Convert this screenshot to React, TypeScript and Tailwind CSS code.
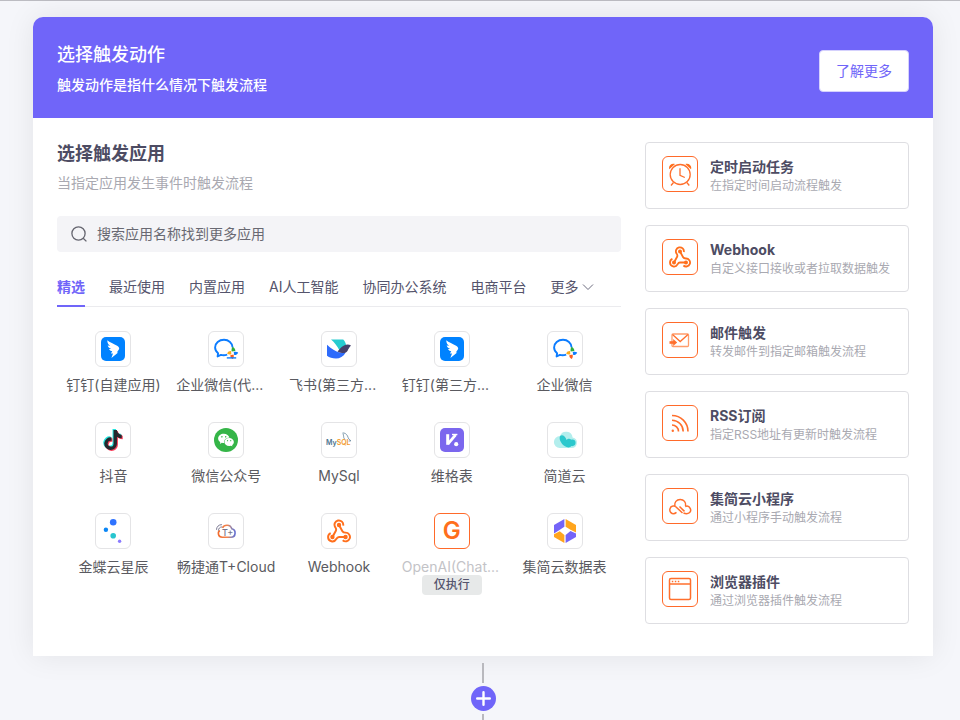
import type { ReactNode } from "react"
import clsx from "clsx"
import { FaTiktok } from "react-icons/fa"
import { AiFillWechat } from "react-icons/ai"

const svgProps = { viewBox: "0 0 24 24", fill: "none", className: "size-6 overflow-visible" }

function WebhookIcon({ className }: { className: string }) {
  return (
    <svg viewBox="1 1 22 21" fill="none" stroke="#ff6f1c" strokeWidth="1.8" className={className}>
      <path d="M18 17h-6c-1.1 0-1.95.94-2.48 1.9A4 4 0 0 1 2 17c0-1.7 1-3 2.4-3.6" />
      <path d="m6 17 3.13-5.78c.53-.97.1-2.18-.5-3.1a4 4 0 1 1 7.2-1.6" />
      <path d="m12 6 3.13 5.73C15.66 12.7 16.9 13 18 13a4 4 0 1 1-2.6 7" />
      <g fill="#ff6f1c" stroke="none">
        <circle cx="12" cy="6" r="2" />
        <circle cx="6" cy="17" r="2" />
        <circle cx="18" cy="17" r="2" />
      </g>
    </svg>
  )
}

function DingTalkIcon() {
  return (
    <svg {...svgProps}>
      <rect width="24" height="24" rx="5" fill="#0082ff" />
      <path
        fill="#fff"
        d="M6.3 3.2c2 2 7 3.6 9.8 5.6 1.6 1.2 2.6 2.2 1.9 3.4-.6 1-1.3 1.9-2.2 3.2h1.4L10.4 21l1.6-4.600h-2l1.200-2.400c-1.600-.1-2.600-.8-3.200-2.100.9.2 1.500.2 2.200 0C8.200 11.200 7 10 6.700 8.300c.8.4 1.500.6 2.300.6C7.300 7.600 6.200 5.600 6.300 3.200z"
      />
    </svg>
  )
}

function WeComIcon({ underline = false }: { underline?: boolean }) {
  return (
    <svg {...svgProps}>
      <path
        d="M18.600 10.500C18.400 6 14.600 2.800 10 2.800c-5 0-8.900 3.300-8.900 7.700 0 2.400 1.200 4.300 3 5.700l-.5 3.300 3.300-1.600c1.900.5 4.200.4 6.300-.3"
        stroke="#0b7cff"
        strokeWidth="1.900"
        strokeLinejoin="round"
      />
      <path d="M18.700 9.800c2 1.100 2.700 2.500 2.600 4.300l-3.600.4c-.5-1.700-.1-3.300 1-4.700z" fill="#2fae3c" />
      <path d="M24.200 15.500c-.8 1.900-2.200 2.700-4 2.600l-.5-3c1.700-.6 3.200-.4 4.500.4z" fill="#0b7cff" />
      <path d="M18.700 22c-1.700-.8-2.400-2.100-2.400-3.800l3.200-.6c.6 1.700.3 3.100-.8 4.400z" fill="#fb5d1e" />
      <path d="M13.100 16.500c.8-1.800 2.100-2.600 3.900-2.500l.4 3.200c-1.500.5-3 .3-4.300-.7z" fill="#fbab1b" />
      {underline && <path d="M12.800 20.900h9.400" stroke="#0b7cff" strokeWidth="1.400" />}
    </svg>
  )
}

function FeishuIcon() {
  return (
    <svg {...svgProps}>
      <path d="M4 2.500h12.200c1.700 1.600 2.600 3.700 2.900 6l-6.700 4.700C10.300 9 7.500 5.500 4 2.500z" fill="#26cbd0" />
      <path d="M0 7.700c4 4 8.600 6.900 14 8.100 1.700.3 3.300.2 4.700-.4C16.300 19.400 13 21.500 9 21.500c-3.600 0-6.700-1-9-2.800z" fill="#2e6bfb" />
      <path d="M24 8.500c-1.600 1.600-2.400 3.300-3.400 5.200-1.600 2.700-5 3.100-10.100.7 3.200-3 5.500-6.700 10-6.800 1.300 0 2.500.3 3.500.9z" fill="#45406b" />
    </svg>
  )
}

function DouyinIcon() {
  return (
    <div className="relative size-5">
      <FaTiktok className="absolute -left-px -top-px size-5 text-[#25e5df]" />
      <FaTiktok className="absolute left-px top-px size-5 text-[#f8425e]" />
      <FaTiktok className="absolute size-5 text-[#24292e]" />
    </div>
  )
}

function WechatIcon() {
  return (
    <div className="flex size-6 items-center justify-center rounded-full bg-[#35b548]">
      <AiFillWechat className="size-[18px] text-white" />
    </div>
  )
}

function MySqlIcon() {
  return (
    <svg {...svgProps}>
      <text x="-1" y="17" fontSize="7" fontWeight="600" fontFamily="Inter, sans-serif" fill="#4b7390">
        My<tspan fill="#f29a2e">SQL</tspan>
      </text>
      <path d="M15.500 5c2-.4 3.800.8 5 2.900.5 1.200.9 2.700 1.500 3.400l2 1.500-2.300.3M16 5.600c.3 1.200.6 1.900.7 3.200-.1 1.400.8 2.100 1.500 2.500" stroke="#66869c" strokeWidth=".8" />
    </svg>
  )
}

function VikaIcon() {
  return (
    <svg {...svgProps}>
      <rect width="24" height="24" rx="5" fill="#7b67ee" />
      <path d="M7.700 6.200v10.600" stroke="#fff" strokeWidth="3" />
      <path d="M8 15.800l7.600-9" stroke="#fff" strokeWidth="2.800" />
      <path d="M12 6.500h5.400" stroke="#fff" strokeWidth="1.400" />
      <circle cx="16.200" cy="16.200" r="2.100" fill="#fff" />
    </svg>
  )
}

function JiandaoIcon() {
  return (
    <svg {...svgProps}>
      <path d="M7 8a6.500 6.500 0 0 1 12.600 1.500A5.300 5.300 0 0 1 18.500 20H6.800A6 6 0 1 1 7 8z" fill="#b3eeed" />
      <path d="M7 8.200c1.800-2.200 5.200-.6 6.600 3.800 1-1.500 3.300-2 4.600-.2 2.200-.7 4.400.6 4.400 3 0 2.300-1.900 3.600-4 3.300-1.200 1.200-3.200 1.700-5 .9C9.200 17.600 5.400 11.500 7 8.200z" fill="#2bc8cd" />
    </svg>
  )
}

function KingdeeIcon() {
  return (
    <svg {...svgProps}>
      <circle cx="12.200" cy="3.300" r="3.300" fill="#2f73ff" />
      <circle cx="4.900" cy="10.700" r="2.200" fill="#0b86f5" />
      <circle cx="12.200" cy="16.700" r="2.800" fill="#28c5cf" />
      <circle cx="18.600" cy="22.200" r="1.700" fill="#8b7bff" />
    </svg>
  )
}

function ChanjetIcon() {
  return (
    <svg {...svgProps}>
      <defs>
        <linearGradient id="chanjet" x1="4" y1="0" x2="22" y2="0" gradientUnits="userSpaceOnUse">
          <stop offset="0" stopColor="#f26b2c" />
          <stop offset=".5" stopColor="#f4834a" />
          <stop offset=".75" stopColor="#8f83ad" />
          <stop offset="1" stopColor="#5868d8" />
        </linearGradient>
      </defs>
      <path d="M8.500 8.800C10 5.500 16.400 4.900 17.800 9.800c4.600.9 4.300 8.400-.8 8.400H8.200c-4.200 0-4.800-5-2.400-6.700" stroke="url(#chanjet)" strokeWidth="1.600" />
      <path d="M2.500 10.800c0-3 2.200-5.200 5.400-5.200M4.400 11.700c0-2.200 1.500-3.800 3.700-3.800" stroke="#7d7b94" strokeWidth="1" />
      <text x="8" y="17" fontSize="9" fontWeight="500" fontFamily="Inter, sans-serif" fill="#77758c">
        T+
      </text>
    </svg>
  )
}

function DataTableIcon() {
  return (
    <svg {...svgProps}>
      <path d="M11.400 0v7.800L6.500 11 1 14.400V6z" fill="#7464f8" />
      <path d="M12.600 0v7.800l4.900 3L23 13.500V6z" fill="#ffa51d" />
      <path d="M1 15.300v2.800L11.400 24v-8l-4.600-3.700z" fill="#ffa51d" />
      <path d="M23 14.500v3.600L12.600 24v-8l4.900-4z" fill="#7464f8" />
    </svg>
  )
}

const orange = { viewBox: "0 0 24 24", fill: "none", stroke: "#ff6f2c", strokeWidth: 1.3, className: "size-6" }

function AlarmIcon() {
  return (
    <svg {...orange}>
      <circle cx="12.200" cy="12.500" r="10" />
      <path d="M12 6.300v7l4.800 2.200M5.500 20.500l-2.500 3M18.800 20.500l2.500 3" />
      <path d="M1.300 7.300C.1 4 3.200.7 7 1.900zM23 7.300c1.200-3.300-1.900-6.600-5.700-5.400z" fill="#ff6f1c" stroke="none" />
    </svg>
  )
}

function MailIcon() {
  return (
    <svg {...orange}>
      <rect x="4" y="6" width="16.500" height="12.500" rx="1" stroke="#ff9d6c" />
      <path d="m4.500 6.500 7.700 7 7.800-7" />
      <path d="M1.500 14.500h5" strokeWidth="2.600" />
      <path d="m5.200 11 4 3.500-4 3.500z" fill="#ff6f2c" stroke="none" />
    </svg>
  )
}

function RssIcon() {
  return (
    <svg {...orange}>
      <path d="M4 4.500c8.800 0 16 7.100 16 16M4 9.200c6.200 0 11.200 5 11.200 11.300M4 14c3.600 0 6.500 2.900 6.500 6.500" strokeWidth="1.600" />
      <circle cx="4.800" cy="19.700" r="1.200" fill="#ff6f2c" stroke="none" />
    </svg>
  )
}

function CloudIcon() {
  return (
    <svg {...orange} strokeWidth={1.5}>
      <path d="M8.500 18.400c-2 1.600-4.200 1.600-5.600.2-1.900-1.900-1.300-5.900 1.900-6.500.8-.2 1.700-.1 2.400.1" />
      <path d="M6.800 12C6.200 8.300 8.500 5.500 12.200 5.500s6 2.800 5.400 6.500" />
      <path d="m7.200 12.200 7.300 6.800M11.500 12.500l5 4.900M15.500 19c5 2.200 8.400-1.300 6.700-4.700-1-2-3.300-2.500-5-1.800" />
    </svg>
  )
}

function BrowserIcon() {
  return (
    <svg {...orange} strokeWidth={1.5}>
      <rect x="1.500" y="1.500" width="21" height="21" rx="1.500" />
      <path d="M1.500 7h21" />
      <path d="M3.800 4.400h7.500" strokeDasharray="1.500 1.500" />
    </svg>
  )
}

interface AppItem {
  name: string
  icon: ReactNode
  disabled?: boolean
}

const apps: AppItem[] = [
  { name: "钉钉(自建应用)", icon: <DingTalkIcon /> },
  { name: "企业微信(代...", icon: <WeComIcon underline /> },
  { name: "飞书(第三方...", icon: <FeishuIcon /> },
  { name: "钉钉(第三方...", icon: <DingTalkIcon /> },
  { name: "企业微信", icon: <WeComIcon /> },
  { name: "抖音", icon: <DouyinIcon /> },
  { name: "微信公众号", icon: <WechatIcon /> },
  { name: "MySql", icon: <MySqlIcon /> },
  { name: "维格表", icon: <VikaIcon /> },
  { name: "简道云", icon: <JiandaoIcon /> },
  { name: "金蝶云星辰", icon: <KingdeeIcon /> },
  { name: "畅捷通T+Cloud", icon: <ChanjetIcon /> },
  { name: "Webhook", icon: <WebhookIcon className="size-6" /> },
  { name: "OpenAI(Chat...", icon: <span className="text-2xl font-semibold text-[#ff6f1c]">G</span>, disabled: true },
  { name: "集简云数据表", icon: <DataTableIcon /> },
]

const triggers = [
  { title: "定时启动任务", desc: "在指定时间启动流程触发", icon: <AlarmIcon /> },
  { title: "Webhook", desc: "自定义接口接收或者拉取数据触发", icon: <WebhookIcon className="size-[22px]" /> },
  { title: "邮件触发", desc: "转发邮件到指定邮箱触发流程", icon: <MailIcon /> },
  { title: "RSS订阅", desc: "指定RSS地址有更新时触发流程", icon: <RssIcon /> },
  { title: "集简云小程序", desc: "通过小程序手动触发流程", icon: <CloudIcon /> },
  { title: "浏览器插件", desc: "通过浏览器插件触发流程", icon: <BrowserIcon /> },
]

const tabs = ["精选", "最近使用", "内置应用", "AI人工智能", "协同办公系统", "电商平台"]

function AppButton({ app }: { app: AppItem }) {
  // shortened names start at the left edge of the label box
  const shortened = app.name.endsWith("...")

  return (
    <button type="button" className="relative flex flex-col items-center gap-2">
      <span
        className={clsx(
          "flex size-9 items-center justify-center rounded-md border bg-white",
          app.disabled ? "border-[#ff6a2a]" : "border-[#e4e4e6]"
        )}
      >
        {app.icon}
      </span>
      <span
        className={clsx(
          "w-[100px] text-sm leading-5 whitespace-nowrap",
          shortened ? "text-left" : "text-center",
          app.disabled ? "text-[#c3c3c7]" : "text-[#5a5a60]"
        )}
      >
        {app.name}
      </span>
      {app.disabled && (
        <span className="absolute top-[62px] rounded-sm bg-[#e7e9e9] px-3 text-xs leading-5 font-medium text-[#55556e]">
          仅执行
        </span>
      )}
    </button>
  )
}

export default function App() {
  return (
    <div className="flex min-h-screen flex-col border-t border-[#bcbcc2] bg-[#f5f6fa] pt-4 pr-[27px] pl-[33px] font-[Inter,'Noto_Sans_CJK_SC',sans-serif]">
      <main className="rounded-t-[10px] bg-white shadow-[0_0_30px_rgba(0,0,0,0.08)]">
        {/* Header */}
        <header className="flex items-center justify-between rounded-t-[10px] bg-[#7065f9] px-6 pt-6 pb-[18px] text-white">
          <div>
            <h1 className="text-lg leading-7 font-medium">选择触发动作</h1>
            <p className="text-sm leading-[31px] font-medium">触发动作是指什么情况下触发流程</p>
          </div>
          <button type="button" className="rounded-sm border border-[#d5d1fd] bg-white px-4 py-2.5 text-sm leading-5 text-[#7065f9]">
            了解更多
          </button>
        </header>

        <div className="flex gap-6 px-6 pt-6 pb-8">
          {/* App picker */}
          <section className="min-w-0 flex-1">
            <h2 className="text-lg leading-6 font-bold text-[#4d4c63]">选择触发应用</h2>
            <p className="mt-[7px] text-sm leading-5 text-[#a9a9b1]">当指定应用发生事件时触发流程</p>

            <label className="mt-[23px] flex h-9 items-center gap-2.5 rounded bg-[#f4f4f7] px-3.5">
              <svg viewBox="0 0 16 16" fill="none" stroke="#65656f" strokeWidth="1.3" className="size-4">
                <circle cx="7.500" cy="7.500" r="6.600" />
                <path d="m12.200 12.200 3.200 3.200" />
              </svg>
              <input
                type="text"
                aria-label="搜索应用名称找到更多应用"
                placeholder="搜索应用名称找到更多应用"
                className="min-w-0 flex-1 bg-transparent text-sm outline-none placeholder:text-[#696972]"
              />
            </label>

            <nav className="mt-[22px] flex gap-6 border-b border-[#ebebee] text-sm text-[#55546c]">
              {tabs.map((tab, i) => (
                <button
                  key={tab}
                  type="button"
                  className={clsx(
                    "-mb-px border-b-2 pt-[3px] pb-2 leading-5",
                    i === 0 ? "border-[#7065f9] font-bold text-[#7065f9]" : "border-transparent"
                  )}
                >
                  {tab}
                </button>
              ))}
              <button type="button" className="-mb-px flex items-center gap-1 border-b-2 border-transparent pt-[3px] pb-2 leading-5">
                更多
                <svg viewBox="0 0 12 12" fill="none" stroke="#6c6b7e" strokeWidth="1" className="size-3">
                  <path d="m1 3.500 5 5 5-5" />
                </svg>
              </button>
            </nav>

            <div className="mt-6 grid grid-cols-5 gap-y-[27px]">
              {apps.map((app) => (
                <AppButton key={app.name} app={app} />
              ))}
            </div>
          </section>

          {/* Built-in triggers */}
          <aside className="flex w-[264px] shrink-0 flex-col gap-4">
            {triggers.map((t) => (
              <button
                key={t.title}
                type="button"
                className="flex items-start gap-3 rounded border border-[#dedee2] px-4 pt-[13px] pb-3 text-left"
              >
                <span className="flex size-9 shrink-0 items-center justify-center rounded-md border border-[#ff6a2a]">
                  {t.icon}
                </span>
                <span className="flex flex-col pt-0.5 whitespace-nowrap">
                  <span className="text-sm leading-[18px] font-bold text-[#4d4c63]">{t.title}</span>
                  <span className="text-xs leading-5 text-[#a9a9b1]">{t.desc}</span>
                </span>
              </button>
            ))}
          </aside>
        </div>
      </main>

      {/* Connector to the next step */}
      <div className="flex flex-1 flex-col items-center pt-[7px]">
        <div className="h-5 w-0.5 bg-[#b9b9be]" />
        <button type="button" aria-label="添加" className="my-[3px] flex size-[25px] items-center justify-center rounded-full bg-[#7065f9]">
          <svg viewBox="0 0 15 15" stroke="#fff" strokeWidth="2.4" strokeLinecap="round" className="size-[15px]">
            <path d="M7.500 1.200v12.600M1.200 7.500h12.600" />
          </svg>
        </button>
        <div className="w-0.5 flex-1 bg-[#b9b9be]" />
      </div>
    </div>
  )
}
